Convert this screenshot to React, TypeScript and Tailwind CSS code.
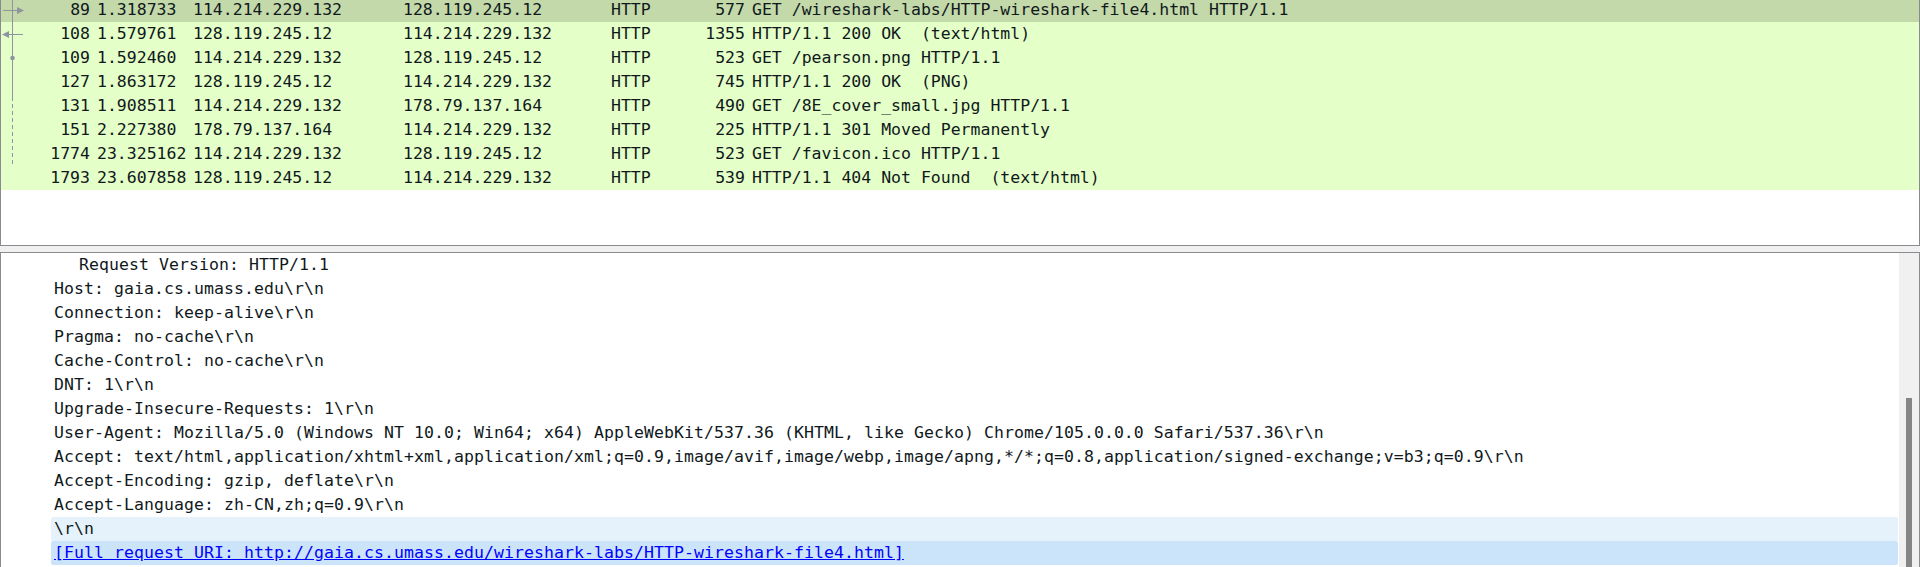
import React from 'react'

type Packet = {
  no: string
  time: string
  src: string
  dst: string
  proto: string
  len: string
  info: string
}

const packets: Packet[] = [
  { no: '89', time: '1.318733', src: '114.214.229.132', dst: '128.119.245.12', proto: 'HTTP', len: '577', info: 'GET /wireshark-labs/HTTP-wireshark-file4.html HTTP/1.1' },
  { no: '108', time: '1.579761', src: '128.119.245.12', dst: '114.214.229.132', proto: 'HTTP', len: '1355', info: 'HTTP/1.1 200 OK  (text/html)' },
  { no: '109', time: '1.592460', src: '114.214.229.132', dst: '128.119.245.12', proto: 'HTTP', len: '523', info: 'GET /pearson.png HTTP/1.1' },
  { no: '127', time: '1.863172', src: '128.119.245.12', dst: '114.214.229.132', proto: 'HTTP', len: '745', info: 'HTTP/1.1 200 OK  (PNG)' },
  { no: '131', time: '1.908511', src: '114.214.229.132', dst: '178.79.137.164', proto: 'HTTP', len: '490', info: 'GET /8E_cover_small.jpg HTTP/1.1' },
  { no: '151', time: '2.227380', src: '178.79.137.164', dst: '114.214.229.132', proto: 'HTTP', len: '225', info: 'HTTP/1.1 301 Moved Permanently' },
  { no: '1774', time: '23.325162', src: '114.214.229.132', dst: '128.119.245.12', proto: 'HTTP', len: '523', info: 'GET /favicon.ico HTTP/1.1' },
  { no: '1793', time: '23.607858', src: '128.119.245.12', dst: '114.214.229.132', proto: 'HTTP', len: '539', info: 'HTTP/1.1 404 Not Found  (text/html)' },
]

const headerLines = [
  'Host: gaia.cs.umass.edu\\r\\n',
  'Connection: keep-alive\\r\\n',
  'Pragma: no-cache\\r\\n',
  'Cache-Control: no-cache\\r\\n',
  'DNT: 1\\r\\n',
  'Upgrade-Insecure-Requests: 1\\r\\n',
  'User-Agent: Mozilla/5.0 (Windows NT 10.0; Win64; x64) AppleWebKit/537.36 (KHTML, like Gecko) Chrome/105.0.0.0 Safari/537.36\\r\\n',
  'Accept: text/html,application/xhtml+xml,application/xml;q=0.9,image/avif,image/webp,image/apng,*/*;q=0.8,application/signed-exchange;v=b3;q=0.9\\r\\n',
  'Accept-Encoding: gzip, deflate\\r\\n',
  'Accept-Language: zh-CN,zh;q=0.9\\r\\n',
]

// related-packet markers in the left gutter of the list
function Gutter() {
  return (
    <svg className="absolute left-0 top-0" width="30" height="200" viewBox="0 0 30 200">
      <g stroke="#8e95a1" fill="#8e95a1" strokeWidth="1">
        <line x1="11.5" y1="0" x2="11.5" y2="97" />
        <line x1="11.5" y1="97" x2="11.5" y2="164" strokeDasharray="4 3" />
        <line x1="2" y1="10.5" x2="17" y2="10.5" />
        <polygon points="16,7 23,10.5 16,14" stroke="none" />
        <polygon points="1,34.5 8,31 8,38" stroke="none" />
        <line x1="8" y1="34.5" x2="22" y2="34.5" />
        <circle cx="11.5" cy="58" r="2.3" stroke="none" />
      </g>
    </svg>
  )
}

function PacketRow({ p, selected }: { p: Packet; selected: boolean }) {
  return (
    <div className={`flex h-[24px] items-center whitespace-pre ${selected ? 'bg-[#c3d9a9]' : 'bg-[#e4ffc7]'}`}>
      <div className="w-[89px] text-right">{p.no}</div>
      <div className="ml-[7px] w-[96px]">{p.time}</div>
      <div className="w-[210px]">{p.src}</div>
      <div className="w-[208px]">{p.dst}</div>
      <div className="flex w-[134px] justify-between">
        <span>{p.proto}</span>
        <span>{p.len}</span>
      </div>
      <div className="pl-[7px]">{p.info}</div>
    </div>
  )
}

export default function App() {
  return (
    <div className="h-[567px] w-[1920px] overflow-hidden bg-[#f0f0f0] font-['DejaVu_Sans_Mono',monospace] text-[16.5px] leading-[24px] text-[#10181c]">
      <div className="relative h-[246px] overflow-hidden border-x border-b border-[#8a8b90] bg-white">
        <div className="-mt-[2px]">
          {packets.map((p, i) => (
            <PacketRow key={p.no} p={p} selected={i === 0} />
          ))}
        </div>
        <Gutter />
      </div>

      <div className="mt-[6px] flex h-[400px] border-x border-t border-[#8a8b90] bg-white">
        <div className="flex-1 pl-[50px] pr-[1px] tracking-[0.065px]">
          <div className="h-[24px] whitespace-pre pl-[28px]">Request Version: HTTP/1.1</div>
          {headerLines.map((l) => (
            <div key={l} className="h-[24px] whitespace-pre pl-[3px]">
              {l}
            </div>
          ))}
          <div className="h-[24px] whitespace-pre rounded-[2px] bg-[#e5f1fb] pl-[3px]">\r\n</div>
          <div className="h-[24px] whitespace-pre rounded-[2px] bg-[#cce4f9] pl-[3px]">
            <span className="text-[#0000ff] underline">
              [Full request URI: http://gaia.cs.umass.edu/wireshark-labs/HTTP-wireshark-file4.html]
            </span>
          </div>
        </div>
        <div className="flex w-[20px] justify-center bg-[#f0f0f0] pt-[145px]">
          <div className="h-full w-[6px] bg-[#858585]" />
        </div>
      </div>
    </div>
  )
}
